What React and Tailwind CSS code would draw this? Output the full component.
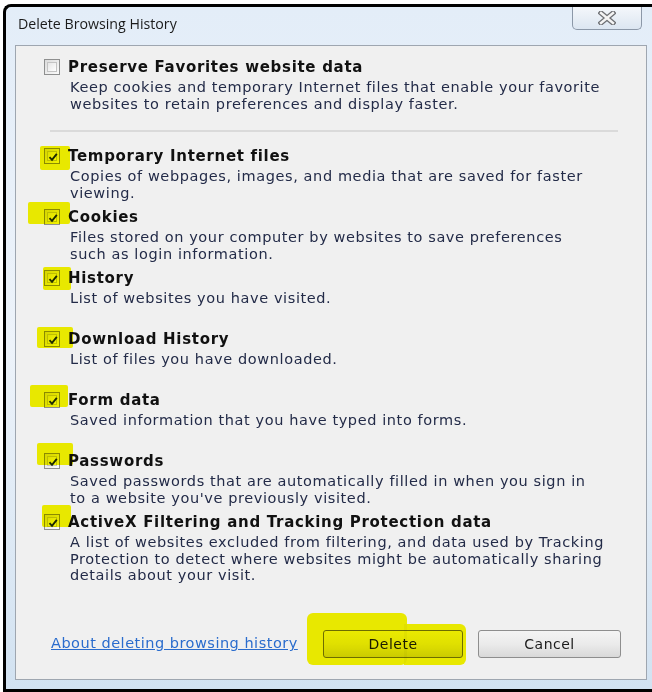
import React from "react";

const items = [
  {
    label: "Temporary Internet files",
    desc: ["Copies of webpages, images, and media that are saved for faster", "viewing."],
  },
  {
    label: "Cookies",
    desc: ["Files stored on your computer by websites to save preferences", "such as login information."],
  },
  { label: "History", desc: ["List of websites you have visited."] },
  { label: "Download History", desc: ["List of files you have downloaded."] },
  { label: "Form data", desc: ["Saved information that you have typed into forms."] },
  {
    label: "Passwords",
    desc: ["Saved passwords that are automatically filled in when you sign in", "to a website you've previously visited."],
  },
  {
    label: "ActiveX Filtering and Tracking Protection data",
    desc: [
      "A list of websites excluded from filtering, and data used by Tracking",
      "Protection to detect where websites might be automatically sharing",
      "details about your visit.",
    ],
  },
];

// marker strokes drawn over the checkboxes (page coordinates)
const marks = [
  "left-[40px] top-[146px] w-[30px] h-[24px]",
  "left-[28px] top-[202px] w-[42px] h-[22px]",
  "left-[43px] top-[267px] w-[28px] h-[23px]",
  "left-[37px] top-[327px] w-[36px] h-[21px]",
  "left-[30px] top-[385px] w-[38px] h-[22px]",
  "left-[37px] top-[443px] w-[36px] h-[22px]",
  "left-[42px] top-[505px] w-[29px] h-[22px]",
];

function Checkbox({ checked }) {
  return (
    <span className="w-[16px] h-[16px] shrink-0 border border-[#8e8f8f] bg-gradient-to-br from-[#dcdcdc] to-[#fbfbfb] p-[2px] flex">
      <span className="flex-1 border border-[#c4c4c4] bg-gradient-to-br from-[#e6e6e6] to-[#ffffff] relative">
        {checked && (
          <svg viewBox="0 0 12 12" className="absolute -left-[1px] -top-[1px] w-[12px] h-[12px]">
            <path d="M2.5 6.2 L5 8.8 L9.8 2.8" fill="none" stroke="#1d2a14" strokeWidth="1.9" />
          </svg>
        )}
      </span>
    </span>
  );
}

function Option({ label, desc, checked, className = "" }) {
  return (
    <div className={`flex pl-[28px] ${className}`}>
      <div className="h-[24px] flex items-center">
        <Checkbox checked={checked} />
      </div>
      <div className="pl-[8px]">
        <div className="h-[24px] leading-[24px] text-[15px] tracking-[0.7px] font-bold text-[#111]">{label}</div>
        <div className="pl-[2px] text-[14.5px] tracking-[0.6px] leading-[16.5px] text-[#232b48]">
          {desc.map((d) => (
            <div key={d}>{d}</div>
          ))}
        </div>
      </div>
    </div>
  );
}

export default function App() {
  return (
    <div
      className="relative w-[652px] h-[692px] bg-white pt-[4px] pl-[3px] overflow-hidden"
      style={{ fontFamily: "'DejaVu Sans', Verdana, sans-serif" }}
    >
      <div className="h-[688px] w-[649px] flex flex-col border-l-[3px] border-t-[3px] border-b-[3px] border-black rounded-tl-[8px] bg-gradient-to-b from-[#e3edf8] via-[#edf3fa] to-[#d2e2f1]">
        <div className="h-[38px] flex items-start justify-between">
          <div
            className="mt-[7px] pl-[12px] text-[14.2px] leading-[20px] text-[#1b1b1b]"
            style={{ fontFamily: "'Open Sans', 'Noto Sans', sans-serif" }}
          >
            Delete Browsing History
          </div>
          <div className="mr-[10px] w-[70px] h-[23px] border border-t-0 border-[#8c98a8] rounded-b-[5px] bg-gradient-to-b from-[#f4f7fb] to-[#dce6f1] flex items-center justify-center">
            <svg viewBox="0 0 18 14" className="w-[18px] h-[14px]">
              <path d="M3 2 L15 12 M15 2 L3 12" stroke="#6d6f73" strokeWidth="5" strokeLinecap="square" />
              <path d="M3 2 L15 12 M15 2 L3 12" stroke="#f4f4f4" strokeWidth="2.4" strokeLinecap="square" />
            </svg>
          </div>
        </div>

        <div className="ml-[9px] w-[632px] h-[635px] bg-[#f0f0f0] border border-[#9ea6b0] flex flex-col pt-[9px]">
          <Option
            label="Preserve Favorites website data"
            desc={[
              "Keep cookies and temporary Internet files that enable your favorite",
              "websites to retain preferences and display faster.",
            ]}
          />
          <div className="mt-[18px] ml-[34px] w-[568px] h-[2px] bg-[#dadada]" />
          <div className="mt-[12px] flex flex-col">
            {items.map((it) => (
              <Option key={it.label} label={it.label} desc={it.desc} checked className="h-[61px]" />
            ))}
          </div>

          <div className="mt-auto pb-[21px] pl-[35px] pr-[25px] flex items-center">
            <a href="#" className="text-[14.5px] tracking-[0.5px] text-[#2a6ccd] underline">
              About deleting browsing history
            </a>
            <div className="ml-auto flex gap-[15px]">
              <button className="w-[140px] h-[28px] rounded-[3px] border border-[#707070] bg-gradient-to-b from-[#f2f2f2] via-[#e8e8e8] to-[#d2d2d2] text-[14px] tracking-[0.5px] text-[#1a1a1a]">
                Delete
              </button>
              <button className="w-[143px] h-[28px] rounded-[3px] border border-[#8e8e8e] bg-gradient-to-b from-[#f4f4f4] via-[#ebebeb] to-[#d9d9d9] text-[14px] tracking-[0.5px] text-[#1a1a1a]">
                Cancel
              </button>
            </div>
          </div>
        </div>
      </div>

      {marks.map((m) => (
        <span key={m} className={`absolute ${m} bg-[#f7f700] mix-blend-multiply rounded-[2px] pointer-events-none`} />
      ))}
      <span className="absolute left-[307px] top-[613px] w-[100px] h-[52px] bg-[#f7f700] mix-blend-multiply rounded-[6px] pointer-events-none" />
      <span className="absolute left-[404px] top-[624px] w-[62px] h-[41px] bg-[#f7f700] mix-blend-multiply rounded-r-[6px] pointer-events-none" />
    </div>
  );
}
